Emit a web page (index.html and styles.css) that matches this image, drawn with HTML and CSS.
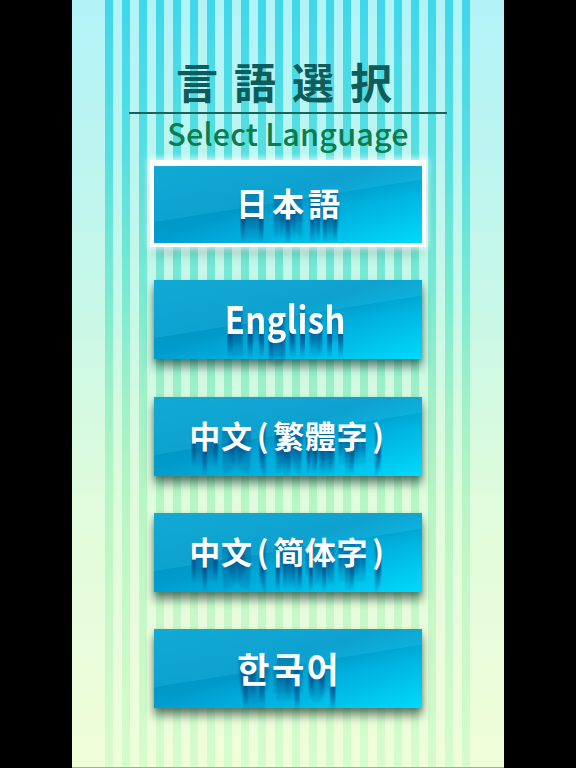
FILE: index.html
```html
<!DOCTYPE html>
<html lang="ja">
<head>
<meta charset="utf-8">
<title>言語選択 Select Language</title>
<link rel="stylesheet" href="styles.css">
</head>
<body>
<main class="screen">
  <header class="heading">
    <h1 class="title">言語選択</h1>
    <div class="rule"></div>
    <p class="subtitle">Select Language</p>
  </header>
  <nav class="menu">
    <button class="lang selected" lang="ja"><span class="label cjk">日本語</span></button>
    <button class="lang" lang="en"><span class="label latin">English</span></button>
    <button class="lang" lang="zh-Hant"><span class="label zh">中文<span class="paren">(</span>繁體字<span class="paren">)</span></span></button>
    <button class="lang" lang="zh-Hans"><span class="label zh">中文<span class="paren">(</span>简体字<span class="paren">)</span></span></button>
    <button class="lang" lang="ko"><span class="label ko">한국어</span></button>
  </nav>
</main>
</body>
</html>
```
FILE: styles.css
```css
html, body {
  margin: 0;
  padding: 0;
  background: #000;
}

body {
  font-family: "Noto Sans CJK JP", "Noto Sans", sans-serif;
}

.screen {
  position: relative;
  width: 432px;
  height: 768px;
  margin: 0 auto;
  box-sizing: border-box;
  border-bottom: 1px solid #52c9da;
  background: linear-gradient(to bottom,
    #b2f3f8 0%, #bcf5f0 20%, #c8f8e8 40%, #d6fae0 55%,
    #e0fcdc 66%, #e8fcdc 81%, #f0fed8 100%);
  display: flex;
  flex-direction: column;
  align-items: center;
  overflow: hidden;
}

.screen::before {
  content: "";
  position: absolute;
  top: 0;
  bottom: 0;
  left: 33px;
  width: 366px;
  background: linear-gradient(to bottom,
    #3fd7ec 0%, #56dfe0 20%, #7eecd0 40%, #a0f0c8 52%,
    #b8f6c4 66%, #c8f8c8 81%, #d6fccc 100%);
  -webkit-mask-image: repeating-linear-gradient(90deg, #000 0 8px, transparent 8px 17px);
  mask-image: repeating-linear-gradient(90deg, #000 0 8px, transparent 8px 17px);
}

.heading {
  position: relative;
  display: flex;
  flex-direction: column;
  align-items: center;
  margin-top: 60px;
}

.title {
  margin: 0;
  font-size: 42px;
  line-height: 1;
  font-weight: 700;
  letter-spacing: 16px;
  padding-left: 8px;
  color: #0f5c5c;
}

.rule {
  width: 318px;
  height: 2px;
  background: #17645a;
  margin-top: 10px;
}

.subtitle {
  margin: 0;
  margin-top: 1px;
  font-size: 30.5px;
  line-height: 36px;
  font-weight: 500;
  color: #0b7c4c;
  letter-spacing: 0.2px;
}

.menu {
  position: relative;
  display: flex;
  flex-direction: column;
  align-items: center;
  gap: 37.25px;
  margin-top: 13px;
}

.lang {
  display: flex;
  align-items: center;
  justify-content: center;
  width: 268px;
  height: 79px;
  padding: 0 0 3px;
  border: 0;
  margin: 0;
  font-family: inherit;
  color: #fff;
  background:
    linear-gradient(171deg, rgba(255,255,255,0.07) 0%, rgba(255,255,255,0.05) 47.5%, rgba(0,0,0,0.03) 48%, rgba(0,0,0,0) 60%),
    linear-gradient(162deg, #00a3d1 0%, #009ccd 45%, #00b8e4 72%, #00dafc 100%);
  box-shadow: 0 8px 9px rgba(20, 55, 45, 0.55), 0 2px 4px rgba(20, 55, 45, 0.25);
  cursor: pointer;
}

.lang.selected {
  box-shadow:
    inset 0 2px 0 #fff,
    0 0 0 4px #fff,
    0 0 6px 6px rgba(255,255,255,0.75),
    0 10px 12px rgba(20, 55, 45, 0.25);
}

.label {
  display: inline-block;
  font-weight: 700;
  line-height: 1;
  white-space: nowrap;
  text-shadow:
    0 2px 1px rgba(0, 75, 135, 0.22),
    0 4px 1px rgba(0, 75, 135, 0.20),
    0 6px 1px rgba(0, 75, 135, 0.18),
    0 8px 1px rgba(0, 75, 135, 0.17),
    0 10px 1px rgba(0, 75, 135, 0.15),
    0 12px 1px rgba(0, 75, 135, 0.14),
    0 14px 1px rgba(0, 75, 135, 0.12),
    0 16px 1px rgba(0, 75, 135, 0.11),
    0 18px 1px rgba(0, 75, 135, 0.09),
    0 20px 1px rgba(0, 75, 135, 0.08),
    0 22px 1px rgba(0, 75, 135, 0.06),
    0 24px 1px rgba(0, 75, 135, 0.05);
}

.cjk {
  font-size: 32px;
  letter-spacing: 4px;
  padding-left: 4px;
}

.latin {
  font-size: 38px;
  letter-spacing: 0.5px;
  margin-right: 6px;
  transform: scaleX(0.86);
}

.zh {
  font-size: 31px;
  letter-spacing: 0.7px;
  padding-left: 2px;
}

.paren {
  margin: 0 4px;
}

.ko {
  font-family: "Noto Sans CJK KR", "Noto Sans CJK JP", sans-serif;
  font-size: 35px;
  letter-spacing: 2.5px;
  padding-left: 2.5px;
}
```
